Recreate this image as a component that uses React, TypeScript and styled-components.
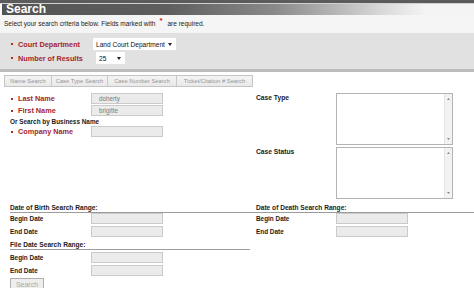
import React from "react";
import styled, { createGlobalStyle } from "styled-components";

const Global = createGlobalStyle`
  html, body { margin: 0; padding: 0; background: #fff; }
  body { font-family: "Liberation Sans", Arial, sans-serif; }
  * { box-sizing: border-box; }
`;

const Page = styled.div`
  width: 474px;
  height: 288px;
  overflow: hidden;
  background: #fff;
`;

const TopRule = styled.div`
  height: 4px;
  background: #5b5b5b;
  border-bottom: 1px solid #d2d2d2;
`;

const Header = styled.h1`
  margin: 0 0 0 2px;
  height: 11px;
  padding-left: 4px;
  background: linear-gradient(to right, #545454 0%, #5e5e5e 35%, #8a8a8a 58%, #dedede 82%, #f4f4f4 90%);
  color: #fff;
  font-size: 12px;
  line-height: 11px;
  font-weight: bold;
`;

const Intro = styled.p`
  margin: 0;
  height: 18px;
  padding: 5px 0 0 4px;
  background: #f5f5f5;
  font-size: 6.5px;
  line-height: 8px;
  color: #222;
`;

const Star = styled.span`
  display: inline-block;
  color: #c41818;
  font-size: 8px;
  font-weight: bold;
  margin: 0 5px 0 4px;
  transform: translateY(-3px);
`;

const CriteriaPanel = styled.div`
  height: 39px;
  padding: 5px 0 0 10px;
  background: #e1e1e1;
  border-bottom: 3px solid #bcbcbc;
  display: flex;
  flex-direction: column;
  gap: 2px;
`;

const PanelRow = styled.div`
  display: flex;
  align-items: center;
  height: 12px;
`;

const Bullet = styled.span`
  display: inline-block;
  width: 2px;
  height: 2px;
  margin: 0 5px 0 1px;
  background: #b42a2a;
  vertical-align: middle;
`;

const RequiredLabel = styled.span<{ $w: number }>`
  flex: none;
  width: ${(p) => p.$w}px;
  display: flex;
  align-items: center;
  font-size: 7.3px;
  font-weight: bold;
  color: #a3262b;
  white-space: nowrap;
`;

const FakeSelect = styled.div<{ $w: number; $shift?: number }>`
  width: ${(p) => p.$w}px;
  height: 12px;
  margin-left: ${(p) => p.$shift ?? 0}px;
  padding: 0 4px 0 3px;
  background: #fff;
  display: flex;
  align-items: center;
  justify-content: space-between;
  font-size: 6.6px;
  color: #111;
  white-space: nowrap;
`;

const Caret = () => (
  <svg width="4" height="3" viewBox="0 0 4 3">
    <path d="M0 0 L4 0 L2 3 Z" fill="#222" />
  </svg>
);

const TabBar = styled.div`
  display: flex;
  width: 249px;
  height: 12px;
  margin: 3px 0 0 4px;
  border: 1px solid #c4c4c4;
  background: linear-gradient(#f4f4f4, #e9e9e9);
`;

const Tab = styled.div<{ $w: number }>`
  width: ${(p) => p.$w}px;
  flex: none;
  text-align: center;
  font-size: 5.8px;
  line-height: 10px;
  color: #959595;
  border-right: 1px solid #c8c8c8;
  white-space: nowrap;
  &:last-child { border-right: none; }
`;

const FormGrid = styled.div`
  display: grid;
  grid-template-columns: 250px 224px;
  margin-top: 6px;
`;

const LeftCell = styled.div`
  padding-left: 10px;
  display: flex;
  flex-direction: column;
`;

const RightCell = styled.div`
  display: flex;
  flex-direction: column;
`;

const NameBlock = styled.div`
  display: flex;
  flex-direction: column;
  gap: 1px;
`;

const FieldRow = styled.div<{ $h?: number; $indent?: number }>`
  display: flex;
  align-items: center;
  height: ${(p) => p.$h ?? 11}px;
  padding-left: ${(p) => p.$indent ?? 0}px;
`;

const PlainLabel = styled.span<{ $w?: number }>`
  flex: none;
  width: ${(p) => p.$w ?? 81}px;
  font-size: 6.4px;
  font-weight: bold;
  color: #1a1a1a;
  white-space: nowrap;
`;

const TextBox = styled.div`
  width: 72px;
  height: 11px;
  padding-left: 7px;
  background: #ebebeb;
  border: 1px solid #cacaca;
  font-size: 6.3px;
  line-height: 9px;
  color: #7a7a7a;
`;

const CaseBlock = styled.div`
  display: flex;
  flex-direction: column;
  gap: 2px;
  padding-left: 6px;
`;

const CaseRow = styled.div`
  display: flex;
  align-items: flex-start;
`;

const CaseLabel = styled.span`
  flex: none;
  width: 80px;
  padding-top: 1px;
  font-size: 6.7px;
  font-weight: bold;
  color: #1a1a1a;
`;

const ListBox = styled.div`
  width: 117px;
  height: 52px;
  border: 1px solid #b4b4b4;
  background: #fff;
  display: flex;
  justify-content: flex-end;
`;

const ScrollTrack = styled.div`
  width: 8px;
  height: 100%;
  background: #f2f2f2;
  border-left: 1px solid #e4e4e4;
  display: flex;
  flex-direction: column;
  justify-content: space-between;
  align-items: center;
  padding: 4px 0;
`;

const Arrow = ({ up }: { up?: boolean }) => (
  <svg width="3" height="2" viewBox="0 0 3 2">
    <path d={up ? "M0 2 L3 2 L1.5 0 Z" : "M0 0 L3 0 L1.5 2 Z"} fill="#8a8a8a" />
  </svg>
);

const RangeHeading = styled.div<{ $indent?: number; $top?: number }>`
  height: 10px;
  margin-top: ${(p) => p.$top ?? 0}px;
  padding-left: ${(p) => p.$indent ?? 0}px;
  border-bottom: 1px solid #9c9c9c;
  font-size: 6.6px;
  font-weight: bold;
  line-height: 9px;
  color: #222;
  white-space: nowrap;
`;

const RangeRows = styled.div<{ $top?: number }>`
  display: flex;
  flex-direction: column;
  gap: 2px;
  margin-top: ${(p) => p.$top ?? 0}px;
`;

const SearchButton = styled.button`
  margin-top: 2px;
  width: 34px;
  height: 12px;
  padding: 0;
  border: 1px solid #b0b0b0;
  background: #eeeeee;
  color: #a8a8a8;
  font-family: inherit;
  font-size: 7px;
`;

const DateRange = ({
  title,
  indent,
  top,
  rowsTop,
}: {
  title: string;
  indent?: number;
  top?: number;
  rowsTop?: number;
}) => (
  <>
    <RangeHeading $indent={indent} $top={top}>
      {title}
    </RangeHeading>
    <RangeRows $top={rowsTop}>
      <FieldRow $indent={indent}>
        <PlainLabel $w={80 + (indent ? 0 : 1)}>Begin Date</PlainLabel>
        <TextBox />
      </FieldRow>
      <FieldRow $indent={indent}>
        <PlainLabel $w={80 + (indent ? 0 : 1)}>End Date</PlainLabel>
        <TextBox />
      </FieldRow>
    </RangeRows>
  </>
);

export default function App() {
  return (
    <Page>
      <Global />
      <TopRule />
      <Header>Search</Header>
      <Intro>
        Select your search criteria below. Fields marked with<Star>*</Star>are required.
      </Intro>
      <CriteriaPanel>
        <PanelRow>
          <RequiredLabel $w={83}>
            <Bullet />
            Court Department
          </RequiredLabel>
          <FakeSelect $w={83}>
            Land Court Department
            <Caret />
          </FakeSelect>
        </PanelRow>
        <PanelRow>
          <RequiredLabel $w={83}>
            <Bullet />
            Number of Results
          </RequiredLabel>
          <FakeSelect $w={29} $shift={3}>
            25
            <Caret />
          </FakeSelect>
        </PanelRow>
      </CriteriaPanel>
      <TabBar>
        <Tab $w={47}>Name Search</Tab>
        <Tab $w={56}>Case Type Search</Tab>
        <Tab $w={69}>Case Number Search</Tab>
        <Tab $w={75}>Ticket/Citation # Search</Tab>
      </TabBar>
      <FormGrid>
        <LeftCell>
          <NameBlock>
            <FieldRow>
              <RequiredLabel $w={81}>
                <Bullet />
                Last Name
              </RequiredLabel>
              <TextBox>doherty</TextBox>
            </FieldRow>
            <FieldRow>
              <RequiredLabel $w={81}>
                <Bullet />
                First Name
              </RequiredLabel>
              <TextBox>brigitte</TextBox>
            </FieldRow>
            <FieldRow $h={8}>
              <PlainLabel $w={200}>Or Search by Business Name</PlainLabel>
            </FieldRow>
            <FieldRow>
              <RequiredLabel $w={81}>
                <Bullet />
                Company Name
              </RequiredLabel>
              <TextBox />
            </FieldRow>
          </NameBlock>
        </LeftCell>
        <RightCell>
          <CaseBlock>
            <CaseRow>
              <CaseLabel>Case Type</CaseLabel>
              <ListBox>
                <ScrollTrack>
                  <Arrow up />
                  <Arrow />
                </ScrollTrack>
              </ListBox>
            </CaseRow>
            <CaseRow>
              <CaseLabel>Case Status</CaseLabel>
              <ListBox>
                <ScrollTrack>
                  <Arrow up />
                  <Arrow />
                </ScrollTrack>
              </ListBox>
            </CaseRow>
          </CaseBlock>
        </RightCell>
        <LeftCell>
          <DateRange title="Date of Birth Search Range:" top={4} />
          <DateRange title="File Date Search Range:" top={3} rowsTop={2} />
          <SearchButton type="button">Search</SearchButton>
        </LeftCell>
        <RightCell>
          <DateRange title="Date of Death Search Range:" indent={6} top={4} />
        </RightCell>
      </FormGrid>
    </Page>
  );
}
